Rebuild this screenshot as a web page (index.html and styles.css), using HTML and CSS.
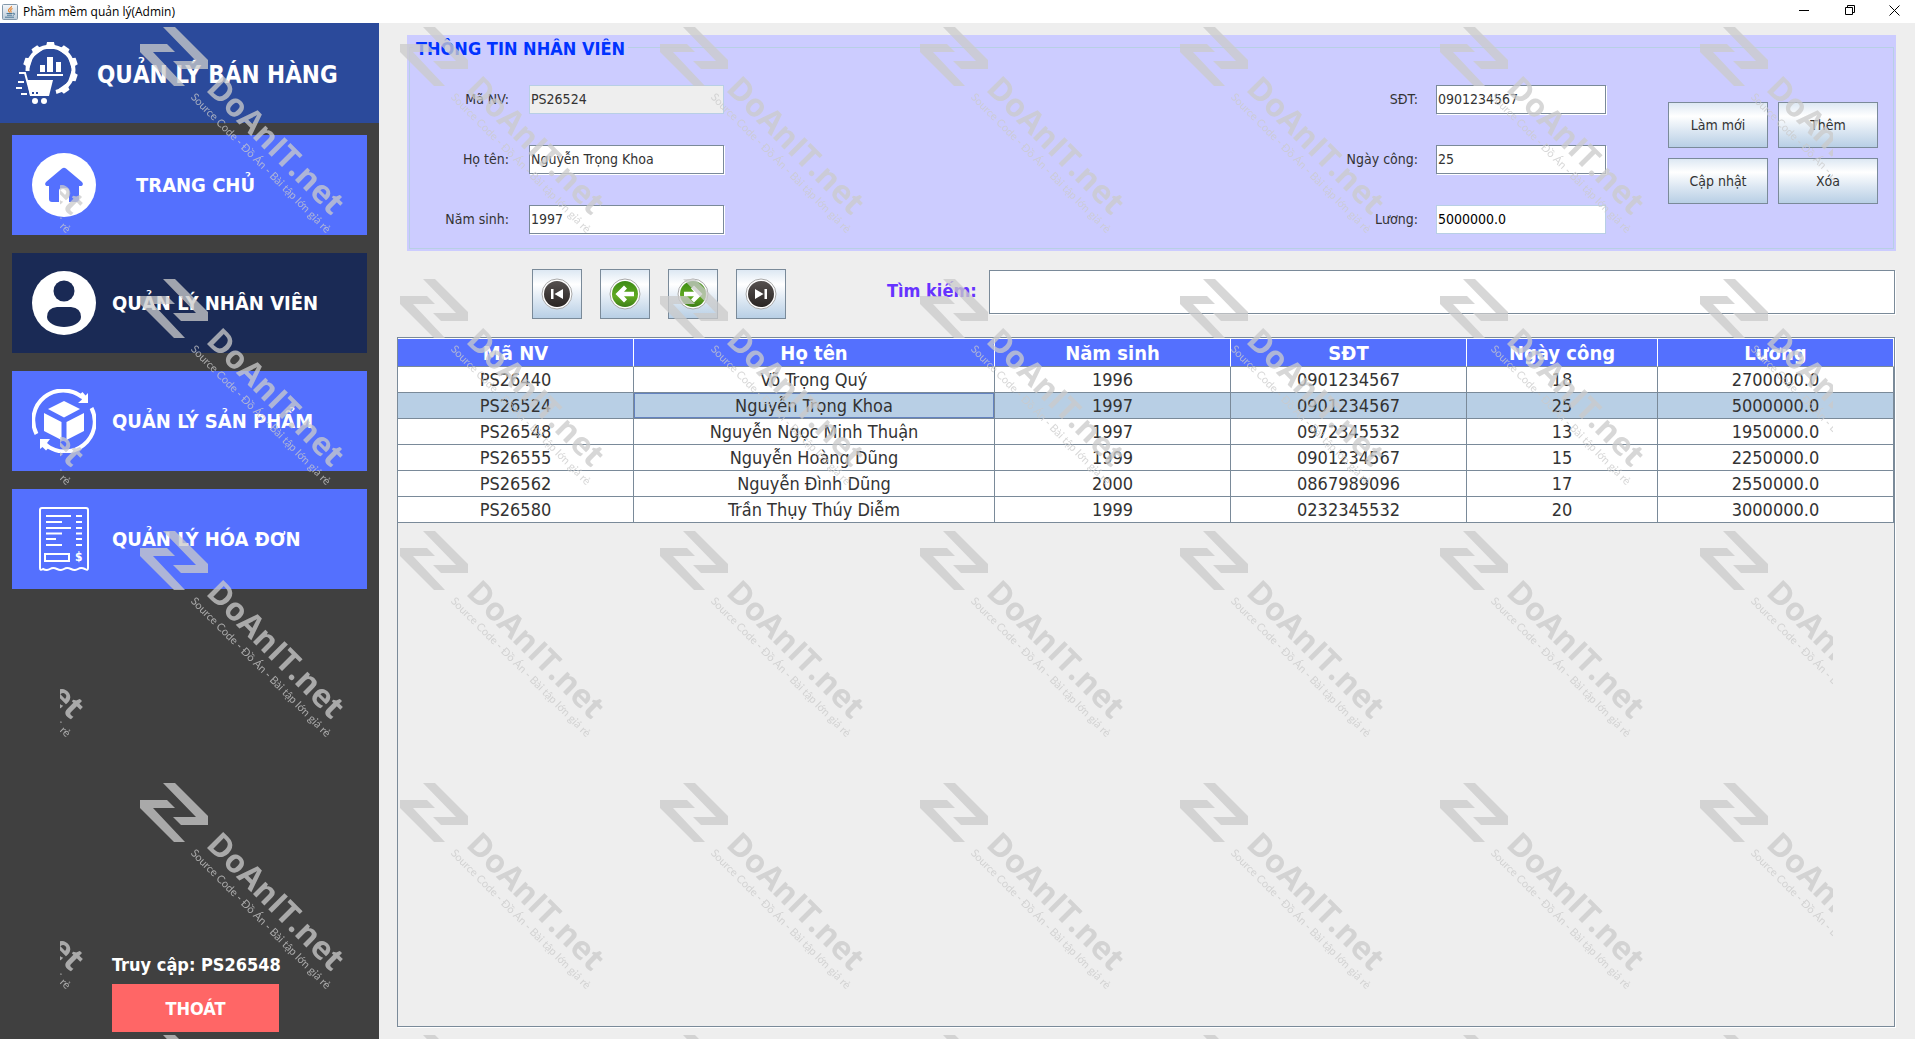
FILE: index.html
```html
<!DOCTYPE html>
<html lang="vi">
<head>
<meta charset="utf-8">
<meta name="viewport" content="width=device-width, initial-scale=1">
<title>Phầm mềm quản lý(Admin)</title>
<link rel="stylesheet" href="styles.css">
</head>
<body>
<header class="titlebar">
  <svg class="titlebar-icon" viewBox="0 0 16 16" aria-hidden="true">
    <defs><linearGradient id="jbg" x1="0" y1="0" x2="0" y2="1"><stop offset="0" stop-color="#f4f7fa"/><stop offset="1" stop-color="#b9cad9"/></linearGradient></defs>
    <rect x=".5" y=".5" width="15" height="15" rx="1" fill="url(#jbg)" stroke="#8398aa"/>
    <path d="M9.500 2C10 4 6 4.500 6.500 6.500C6.700 7.300 7.500 7.800 7.800 8.500M10.500 4.500C8.500 5.500 8.200 6.200 9 7.200C9.300 7.700 9 8.200 8.700 8.500" fill="none" stroke="#e8822a" stroke-width="1.100"/>
    <path d="M4.500 9.500H10.500M5 11.200H10M3 13.200H12M10.800 9.300C13.500 8.700 13 11 10.800 11.400" fill="none" stroke="#4d7896" stroke-width="1"/>
  </svg>
  <span class="titlebar-text">Phầm mềm quản lý(Admin)</span>
  <div class="window-controls">
    <button type="button" aria-label="Thu nhỏ"><svg viewBox="0 0 11 11"><path d="M0 5.500H10"/></svg></button>
    <button type="button" aria-label="Khôi phục"><svg viewBox="0 0 11 11"><path d="M.5 2.500H7.500V9.500H.5ZM2.500 2.500V.5H9.500V7.500H7.500"/></svg></button>
    <button type="button" aria-label="Đóng"><svg viewBox="0 0 11 11"><path d="M.5 .5L10.500 10.500M10.500 .5L.5 10.500"/></svg></button>
  </div>
</header>

<div class="app">
  <aside class="sidebar">
    <div class="brand">
      <svg class="brand-icon" viewBox="0 0 64 64" aria-hidden="true">
        <path d="M11.500 30A23 23 0 1 1 40 51" fill="none" stroke="#fff" stroke-width="4"/>
        <g fill="#fff">
          <path id="cog" d="M29.500 8L31 1H38L39.500 8Z"/>
          <use href="#cog" transform="rotate(36 34.500 28.500)"/>
          <use href="#cog" transform="rotate(72 34.500 28.500)"/>
          <use href="#cog" transform="rotate(108 34.500 28.500)"/>
          <use href="#cog" transform="rotate(144 34.500 28.500)"/>
          <use href="#cog" transform="rotate(-36 34.500 28.500)"/>
          <use href="#cog" transform="rotate(-72 34.500 28.500)"/>
          <path d="M24 24H29V31H24ZM31 16H37V31H31ZM40 21H45V31H40ZM21 33H47V35H21Z"/>
          <path d="M11 39H37L33 55H14Z"/>
          <circle cx="19" cy="60" r="3"/><circle cx="28" cy="60" r="3"/>
        </g>
        <path d="M3 32H9L15 54M2 41H8M0 47H6M5 53H11" fill="none" stroke="#fff" stroke-width="2"/>
        <path d="M16 52H18M20 52H22" stroke="#2b4a9b" stroke-width="2"/>
      </svg>
      <h1>QUẢN LÝ BÁN HÀNG</h1>
    </div>
    <nav class="menu" aria-label="Chính">
      <button class="menu-item menu-item-home" type="button">
        <svg viewBox="0 0 64 64" aria-hidden="true"><circle cx="32" cy="32" r="32" fill="#fff"/><path d="M30 15.500Q32 14 34 15.500L50 29Q52 31.500 49.500 33H47V46Q47 49 44 49H37V38Q37 35 34 35H30Q27 35 27 38V49H20Q17 49 17 46V33H14.500Q12 31.500 14 29Z" fill="#5470fe"/></svg>
        <span>TRANG CHỦ</span>
      </button>
      <button class="menu-item menu-item-active" type="button" aria-current="page">
        <svg viewBox="0 0 64 64" aria-hidden="true"><circle cx="32" cy="32" r="32" fill="#fff"/><circle cx="32" cy="20" r="10.500" fill="#1a2a55"/><path d="M25 36H39Q49 37 49 46C49 52 40 56 32 56S15 52 15 46Q15 37 25 36Z" fill="#1a2a55"/></svg>
        <span>QUẢN LÝ NHÂN VIÊN</span>
      </button>
      <button class="menu-item" type="button">
        <svg viewBox="0 0 64 64" aria-hidden="true">
          <path d="M4.500 45A30 30 0 0 1 50 8M59.500 19A30 30 0 0 1 14 56" fill="none" stroke="#fff" stroke-width="4"/>
          <path d="M56 4V14H46L50 10.500L46.500 6.500L50.500 3L53.500 6.500ZM8 60V50H18L15 54L18 57.500L14 61.500L10.500 58Z" fill="#fff"/>
          <path d="M32 12L48 20L32 28.500L16 20ZM12 24L29.500 33V51L12 42ZM52 24V42L34.500 51V33Z" fill="#fff"/>
        </svg>
        <span>QUẢN LÝ SẢN PHẨM</span>
      </button>
      <button class="menu-item" type="button">
        <svg viewBox="0 0 64 64" aria-hidden="true">
          <g fill="none" stroke="#fff" stroke-width="2">
            <path d="M8 61V3Q8 1 10 1H54Q56 1 56 3V61Q56 64 53 62Q49 60 46 62T39 62T32 62T25 62T18 62T11 62Q8 64 8 61Z"/>
            <path d="M14 9H39M14 15H30M14 21H39M14 26.500H30M14 32H24M14 38H30M44 9H50M44 15H50M44 21H50M44 26.500H50M44 32H50M44 38H50"/>
            <path d="M13 47H37V54H13Z"/>
          </g>
          <text x="43" y="54" fill="#fff" font-size="12" font-weight="bold">$</text>
        </svg>
        <span>QUẢN LÝ HÓA ĐƠN</span>
      </button>
    </nav>
    <div class="session">
      <p>Truy cập: PS26548</p>
      <button class="logout" type="button">THOÁT</button>
    </div>
  </aside>

  <main class="content">
    <section class="panel">
      <fieldset>
        <legend>THÔNG TIN NHÂN VIÊN</legend>
        <div class="panel-body">
          <div class="fields fields-left">
            <label for="code">Mã NV:</label><input id="code" type="text" value="PS26524" disabled>
            <label for="name">Họ tên:</label><input id="name" type="text" value="Nguyễn Trọng Khoa">
            <label for="year">Năm sinh:</label><input id="year" type="text" value="1997">
          </div>
          <div class="panel-right">
            <div class="fields fields-right">
              <label for="phone">SĐT:</label><input id="phone" type="text" value="0901234567">
              <label for="days">Ngày công:</label><input id="days" type="text" value="25">
              <label for="salary">Lương:</label><input id="salary" class="computed" type="text" value="5000000.0" readonly>
            </div>
            <div class="actions">
              <button type="button">Làm mới</button>
              <button type="button">Thêm</button>
              <button type="button">Cập nhật</button>
              <button type="button">Xóa</button>
            </div>
          </div>
        </div>
      </fieldset>
    </section>

    <div class="toolbar">
      <svg class="defs" width="0" height="0" aria-hidden="true">
        <defs>
          <linearGradient id="dark" x1="0" y1="0" x2="0" y2="1"><stop offset="0" stop-color="#55504f"/><stop offset="1" stop-color="#2a2523"/></linearGradient>
          <linearGradient id="green" x1="0" y1="0" x2="0" y2="1"><stop offset="0" stop-color="#3c8a14"/><stop offset=".6" stop-color="#62ab22"/><stop offset="1" stop-color="#3d7d16"/></linearGradient>
        </defs>
      </svg>
      <div class="pager">
        <button type="button" aria-label="Đầu tiên"><svg viewBox="0 0 32 32"><circle cx="16" cy="16" r="15" fill="#fff" stroke="#a9a9a9"/><circle cx="16" cy="16" r="13" fill="url(#dark)"/><path d="M10 11H12.500V21H10ZM22 11V21L13.500 16Z" fill="#fff"/></svg></button>
        <button type="button" aria-label="Trước"><svg viewBox="0 0 32 32"><circle cx="16" cy="16" r="15" fill="#fff" stroke="#a9a9a9"/><circle cx="16" cy="16" r="13" fill="url(#green)"/><path d="M6.500 16L15 7.500L18 10.500L15 13.800H25V18.200H15L18 21.500L15 24.500Z" fill="#fff"/></svg></button>
        <button type="button" aria-label="Sau"><svg viewBox="0 0 32 32"><circle cx="16" cy="16" r="15" fill="#fff" stroke="#a9a9a9"/><circle cx="16" cy="16" r="13" fill="url(#green)"/><path d="M25.500 16L17 7.500L14 10.500L17 13.800H7V18.200H17L14 21.500L17 24.500Z" fill="#fff"/></svg></button>
        <button type="button" aria-label="Cuối cùng"><svg viewBox="0 0 32 32"><circle cx="16" cy="16" r="15" fill="#fff" stroke="#a9a9a9"/><circle cx="16" cy="16" r="13" fill="url(#dark)"/><path d="M22 11H19.500V21H22ZM10 11V21L18.500 16Z" fill="#fff"/></svg></button>
      </div>
      <label class="search-label" for="search">Tìm kiếm:</label>
      <input class="search" id="search" type="text">
    </div>

    <div class="table-view">
      <table>
        <colgroup><col class="col-m"><col class="col-l"><col class="col-m"><col class="col-m"><col class="col-s"><col class="col-m"></colgroup>
        <thead>
          <tr><th>Mã NV</th><th>Họ tên</th><th>Năm sinh</th><th>SĐT</th><th>Ngày công</th><th>Lương</th></tr>
        </thead>
        <tbody>
          <tr><td>PS26440</td><td>Võ Trọng Quý</td><td>1996</td><td>0901234567</td><td>18</td><td>2700000.0</td></tr>
          <tr class="selected"><td>PS26524</td><td class="focused">Nguyễn Trọng Khoa</td><td>1997</td><td>0901234567</td><td>25</td><td>5000000.0</td></tr>
          <tr><td>PS26548</td><td>Nguyễn Ngọc Minh Thuận</td><td>1997</td><td>0972345532</td><td>13</td><td>1950000.0</td></tr>
          <tr><td>PS26555</td><td>Nguyễn Hoàng Dũng</td><td>1999</td><td>0901234567</td><td>15</td><td>2250000.0</td></tr>
          <tr><td>PS26562</td><td>Nguyễn Đình Dũng</td><td>2000</td><td>0867989096</td><td>17</td><td>2550000.0</td></tr>
          <tr><td>PS26580</td><td>Trần Thụy Thúy Diễm</td><td>1999</td><td>0232345532</td><td>20</td><td>3000000.0</td></tr>
        </tbody>
      </table>
    </div>
  </main>
</div>

<div class="watermark" aria-hidden="true">
  <svg width="100%" height="100%">
    <defs>
      <pattern id="mark" patternUnits="userSpaceOnUse" x="80" y="27" width="260" height="252">
        <g fill="#cbcbcb">
          <path d="M23 0H35L68 33V42H41L33 34H56ZM0 17H27L35 25H13L45 59H34L0 25Z"/>
          <g transform="translate(65 63) rotate(45)">
            <text class="mark-name" x="0" y="0">DoAnIT.net</text>
            <text class="mark-line" x="-5" y="16">Source Code - Đồ Án - Bài tập lớn giá rẻ</text>
          </g>
        </g>
      </pattern>
    </defs>
    <rect width="100%" height="100%" fill="url(#mark)"/>
  </svg>
</div>
</body>
</html>
```
FILE: styles.css
```css
* { box-sizing: border-box; }

body {
  margin: 0;
  min-height: 100vh;
  display: flex;
  flex-direction: column;
  position: relative;
  background: #eee;
  color: #333;
  font-family: "DejaVu Sans Condensed", "Noto Sans", sans-serif;
  font-size: 14px;
}

button, input { font: inherit; color: inherit; }
button { padding: 0; }
h1, p { margin: 0; }

/* Window title bar */
.titlebar {
  display: flex;
  align-items: center;
  height: 23px;
  padding-left: 2px;
  gap: 5px;
  background: #fff;
  color: #000;
}
.titlebar-icon { width: 16px; height: 16px; }
.titlebar-text { font-family: "Open Sans", sans-serif; font-size: 12px; line-height: 16px; }
.window-controls { display: flex; align-self: flex-start; margin-left: auto; }
.window-controls button {
  display: grid;
  place-items: center;
  width: 46px;
  height: 20px;
  border: 0;
  background: none;
}
.window-controls button:last-child { width: 42px; }
.window-controls svg { width: 11px; height: 11px; fill: none; stroke: #000; }

/* Layout */
.app {
  flex: 1;
  display: grid;
  grid-template-columns: 379px minmax(0, 1fr);
}

/* Sidebar */
.sidebar {
  display: flex;
  flex-direction: column;
  background: #404040;
  color: #fff;
}
.brand {
  display: flex;
  align-items: center;
  gap: 17px;
  height: 100px;
  padding-left: 16px;
  background: #2b4a9b;
}
.brand-icon { width: 64px; height: 64px; }
.brand h1 { padding-top: 4px; font-size: 24px; line-height: 32px; white-space: nowrap; }
.menu { display: grid; gap: 18px; padding: 12px; }
.menu-item {
  display: flex;
  align-items: center;
  gap: 16px;
  height: 100px;
  padding-left: 20px;
  border: 0;
  background: #5470fe;
  font-size: 20px;
  font-weight: bold;
  white-space: nowrap;
}
.menu-item svg { width: 64px; height: 64px; }
.menu-item-home { gap: 40px; }
.menu-item-active { background: #1a2a55; }
.session { margin: auto 0 7px 112px; }
.session p { font-size: 18px; font-weight: bold; line-height: 24px; padding-bottom: 7px; }
.logout {
  width: 167px;
  height: 48px;
  border: 0;
  background: #f66;
  font-size: 18px;
  font-weight: bold;
}

/* Main area */
.content {
  display: flex;
  flex-direction: column;
  gap: 18px;
  padding: 12px 19px 12px 18px;
}
.panel { margin-left: 10px; padding: 0 2px 2px; background: #ccf; }
fieldset { min-width: 0; margin: 0; padding: 0; border: 1px solid #b8cfe5; }
legend { margin-left: 3px; padding: 3px 3px 0; color: #03f; font-size: 18px; font-weight: bold; line-height: 22px; }
.panel-body {
  display: flex;
  justify-content: space-between;
  padding: 24px 15px 14px 0;
}
.panel-right { display: flex; gap: 62px; }
.fields { display: grid; grid-auto-rows: 30px; align-items: center; gap: 30px 18px; }
.fields-left { grid-template-columns: 99px 195px; column-gap: 20px; }
.fields-right { grid-template-columns: auto 170px; }
.fields label { text-align: right; }
input {
  width: 100%;
  height: 29px;
  padding: 0 1px;
  border: 1px solid #7a8a99;
  border-radius: 0;
  background: #fff;
  box-shadow: 1px 1px #fff;
  outline: 0;
}
input:disabled { border-color: #b8cfe5; background: #eee; box-shadow: none; color: #333; opacity: 1; }
.computed { border-color: #b8cfe5; box-shadow: none; color: #000; }

.actions {
  display: grid;
  grid-template: 46px 46px / 100px 100px;
  gap: 10px;
  padding-top: 18px;
}
.actions button, .pager button {
  border: 1px solid #7a8a99;
  background: linear-gradient(#dde8f3, #fff 30%, #dde8f3 62%, #b8cfe5);
}

/* Record navigation and search */
.toolbar { display: flex; height: 50px; padding: 0 1px 0 135px; }
.defs { position: absolute; }
.pager { display: flex; gap: 18px; }
.pager button { display: grid; place-items: center; width: 50px; height: 50px; }
.pager svg { width: 32px; height: 32px; }
.search-label { margin: 0 12px 0 101px; color: #63f; font-size: 18px; font-weight: bold; line-height: 44px; white-space: nowrap; }
.search { flex: 1; height: 44px; width: auto; margin-top: 1px; font-size: 18px; }

/* Employee table */
.table-view { flex: 1; margin-right: 1px; border: 1px solid #7a8a99; box-shadow: 1px 1px #fff; }
table { width: 100%; table-layout: fixed; border-collapse: separate; border-spacing: 0; font-size: 18px; line-height: 24px; }
.col-s { width: 191px; }
.col-m { width: 236px; }
.col-l { width: 361px; }
th, td { padding: 0; text-align: center; border: solid #7a8a99; border-width: 0 1px 1px 0; }
th { height: 29px; border-top: 1px solid #fff; border-right-color: #fff; background: #5470fe; color: #fff; font-size: 20px; }
td { height: 26px; background: #fff; }
.selected td { background: #b8cfe5; }
.selected .focused { box-shadow: inset 0 0 0 1px #6382bf; }

/* Repeating brand watermark laid over the whole window */
.watermark {
  position: absolute;
  inset: 0 82px 0 60px;
  overflow: hidden;
  opacity: .76;
  pointer-events: none;
}
.watermark svg { display: block; }
.mark-name { font-family: "Open Sans", sans-serif; font-size: 32px; font-weight: bold; }
.mark-line { font-family: Lato, "Noto Sans", sans-serif; font-size: 11px; }
```
